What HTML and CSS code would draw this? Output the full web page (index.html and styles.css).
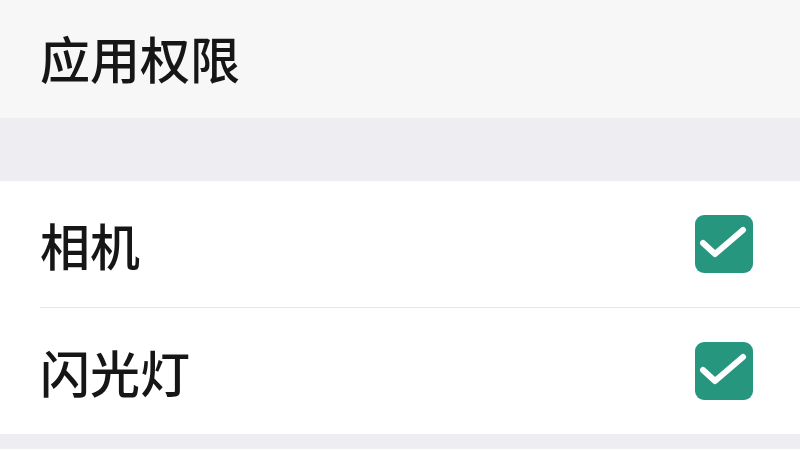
FILE: index.html
```html
<!DOCTYPE html>
<html lang="zh-CN">
<head>
<meta charset="utf-8">
<link rel="stylesheet" href="styles.css">
</head>
<body>
<div class="page">
  <div class="header">应用权限</div>
  <div class="band"></div>
  <div class="list">
    <div class="row">
      <span class="label">相机</span>
      <span class="check"><svg viewBox="0 0 58 58" width="58" height="58"><path d="M8 28 L20 39 L48 15" fill="none" stroke="#fff" stroke-width="6" stroke-linecap="round" stroke-linejoin="round"/></svg></span>
    </div>
    <div class="divider"></div>
    <div class="row">
      <span class="label">闪光灯</span>
      <span class="check"><svg viewBox="0 0 58 58" width="58" height="58"><path d="M8 28 L20 39 L48 15" fill="none" stroke="#fff" stroke-width="6" stroke-linecap="round" stroke-linejoin="round"/></svg></span>
    </div>
  </div>
  <div class="band bottom"></div>
</div>
</body>
</html>
```
FILE: styles.css
```css
html, body {
  margin: 0;
  padding: 0;
  background: #ffffff;
}
.page {
  width: 800px;
  height: 449px;
  overflow: hidden;
  font-family: "Noto Sans CJK SC", "Noto Sans", sans-serif;
  color: #161616;
}
.header {
  height: 118px;
  background: #f7f7f8;
  display: flex;
  align-items: center;
  padding-left: 40px;
  padding-bottom: 4px;
  box-sizing: border-box;
  font-size: 50px;
  font-weight: 500;
}
.band {
  height: 63px;
  background: #eeeef2;
}
.band.bottom {
  height: 20px;
}
.list {
  background: #ffffff;
}
.row {
  height: 126px;
  display: flex;
  align-items: center;
  justify-content: space-between;
  padding-left: 40px;
  padding-right: 47px;
}
.label {
  font-size: 50px;
  font-weight: 500;
  line-height: 1;
}
.divider {
  height: 1px;
  margin-left: 40px;
  background: #e6e6e8;
}
.check {
  width: 58px;
  height: 58px;
  border-radius: 9px;
  background: #27967f;
  display: flex;
}
```
